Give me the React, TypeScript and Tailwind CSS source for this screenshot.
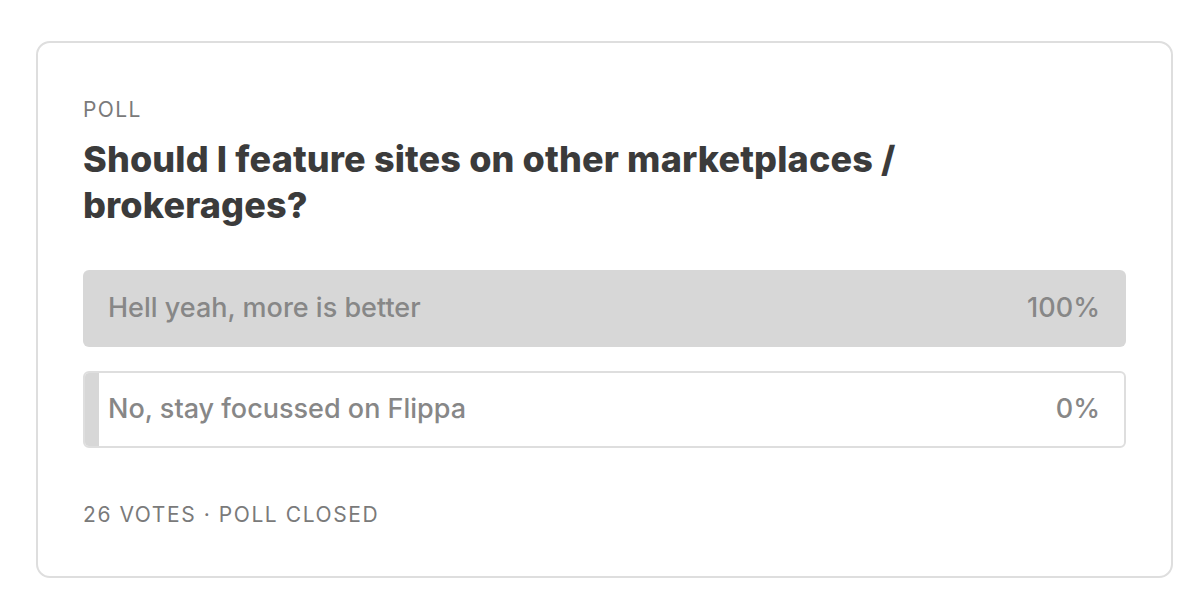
import React from "react";

const options = [
  { label: "Hell yeah, more is better", pct: 100 },
  { label: "No, stay focussed on Flippa", pct: 0 },
];

export default function App() {
  return (
    <div
      className="w-[1200px] h-[615px] bg-white pl-[36px] pr-[27px] pt-[41px] pb-[37px]"
      style={{ fontFamily: "Inter, 'Noto Sans', sans-serif" }}
    >
      <div className="h-full rounded-[14px] border-2 border-[#dedede] px-[45px] pt-[55px]">
        <div className="text-[21px] leading-[24px] tracking-[0.065em] text-[#7a7a7a]">POLL</div>
        <h1 className="mt-[14px] text-[36px] leading-[46px] font-extrabold text-[#3b3b3b] tracking-[0.004em] w-[900px]">
          Should I feature sites on other marketplaces / brokerages?
        </h1>
        <div className="mt-[42px] flex flex-col gap-[24px]">
          {options.map((o) => (
            <div
              key={o.label}
              className={`relative h-[77px] rounded-[6px] overflow-hidden ${
                o.pct === 100 ? "bg-[#d7d7d7]" : "bg-white border-2 border-[#dedede]"
              }`}
            >
              {o.pct === 0 && (
                <div className="absolute left-0 top-0 bottom-0 w-[14px] bg-[#d7d7d7]" />
              )}
              <div
                className={`relative h-full flex items-center justify-between text-[27px] font-medium text-[#878787] ${
                  o.pct === 100 ? "pl-[25px] pr-[26px]" : "pl-[23px] pr-[24px]"
                }`}
              >
                <span>{o.label}</span>
                <span>{o.pct}%</span>
              </div>
            </div>
          ))}
        </div>
        <div className="mt-[55px] text-[21px] leading-[24px] tracking-[0.075em] text-[#7a7a7a]">
          26 VOTES · POLL CLOSED
        </div>
      </div>
    </div>
  );
}
